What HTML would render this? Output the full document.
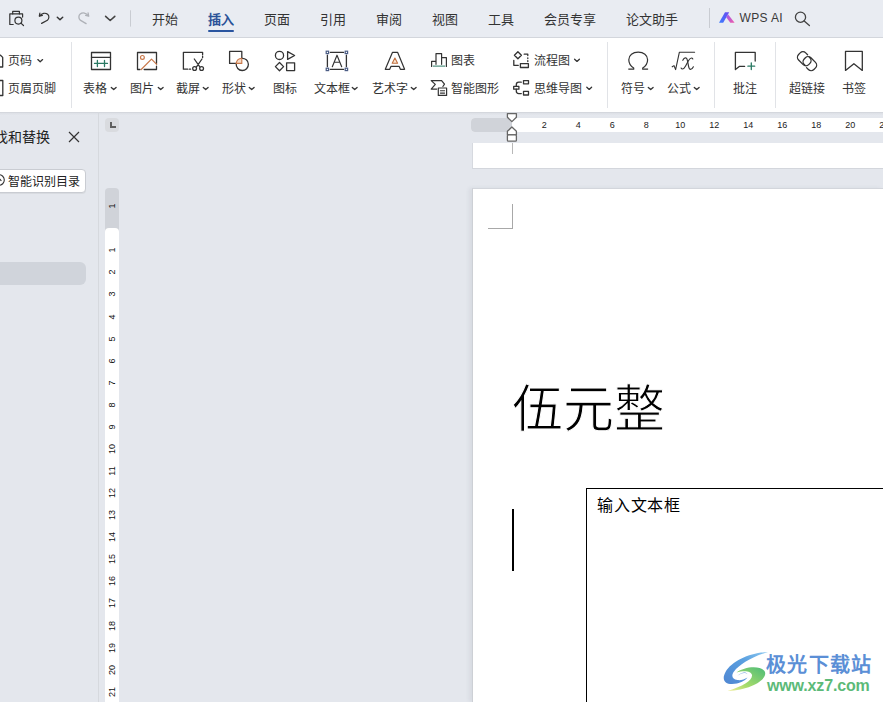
<!DOCTYPE html>
<html lang="zh-CN"><head><meta charset="utf-8">
<style>
*{margin:0;padding:0;box-sizing:border-box}
html,body{width:883px;height:702px;overflow:hidden;background:#e4e7ed;font-family:"Liberation Sans",sans-serif;color:#222}
.a{position:absolute}
svg{position:absolute;overflow:visible}
#top{position:absolute;left:0;top:0;width:883px;height:38px;background:#e9ecf2}
.tab{position:absolute;top:9.5px;font-size:13px;line-height:19px;color:#333;white-space:nowrap}
#ribbon{position:absolute;left:0;top:38px;width:883px;height:74px;background:#fff}
.lbl{position:absolute;top:80.5px;font-size:12px;line-height:17px;color:#333;white-space:nowrap}
.sep{position:absolute;top:42px;width:1px;height:66px;background:#e1e3e7}
.dd{position:absolute;width:6px;height:4px}
.rn{position:absolute;top:118px;width:20px;margin-left:-10px;text-align:center;font-size:9px;line-height:14px;color:#222}
.vn{position:absolute;left:112px;width:20px;height:12px;margin-left:-10px;margin-top:-6px;text-align:center;font-size:9px;line-height:12px;color:#111;transform:rotate(-90deg)}
</style></head><body>
<div id="top"></div>
<svg style="left:0;top:0" width="140" height="38" viewBox="0 0 140 38">
 <g fill="none" stroke="#333" stroke-width="1.2" stroke-linecap="round" stroke-linejoin="round">
  <path d="M12.7 13.9V11.3h6.7v2.6"/>
  <path d="M13.2 24.5H9.8V13.9h12.8v3.2"/>
  <circle cx="18.4" cy="20.6" r="3.5"/>
  <path d="M20.9 23.1l2.6 2.4"/>
  <path d="M39.3 16.2l0.6-3.2M39.3 16.2l3.1-0.9"/>
  <path d="M39.6 15.8c2.4-2.6 5.8-3.4 8-1.5c1.9 1.6 1.6 4.2 -0.2 6l-5.8 3.1"/>
  <path d="M57.3 17.3l2.7 2.5l2.7-2.5" stroke-width="1.5"/>
 </g>
 <g fill="none" stroke="#aeb1b7" stroke-width="1.3" stroke-linecap="round" stroke-linejoin="round">
  <path d="M88.7 16.2l-0.6-3.2M88.7 16.2l-3.1-0.9"/>
  <path d="M88.4 15.6c-2.2-2.6-5.6-3.6-8.2-1.6c-1.8 1.4-1.7 4.3 0 6.1l5.9 3.5"/>
 </g>
 <path d="M105.6 16.4l4.6 4.1l4.6-4.1" fill="none" stroke="#444" stroke-width="1.6" stroke-linecap="round" stroke-linejoin="round"/>
 <rect x="130" y="10.3" width="1" height="16.3" fill="#c9ccd2"/>
</svg>
<div class="tab" style="left:152px">开始</div>
<div class="tab" style="left:208px;color:#2a5298;font-weight:bold">插入</div>
<div class="a" style="left:208px;top:30px;width:26px;height:2px;background:#2a55a0;border-radius:1px"></div>
<div class="tab" style="left:264px">页面</div>
<div class="tab" style="left:320px">引用</div>
<div class="tab" style="left:376px">审阅</div>
<div class="tab" style="left:432px">视图</div>
<div class="tab" style="left:488px">工具</div>
<div class="tab" style="left:544px">会员专享</div>
<div class="tab" style="left:626px">论文助手</div>
<div class="a" style="left:709px;top:8px;width:1px;height:20px;background:#c9ccd2"></div>
<svg style="left:718px;top:11px" width="18" height="13" viewBox="0 0 18 13">
 <defs>
  <linearGradient id="wl" x1="0" y1="1" x2="1" y2="0"><stop offset="0" stop-color="#3b7bff"/><stop offset="1" stop-color="#6a4cf0"/></linearGradient>
  <linearGradient id="wr" x1="0" y1="0" x2="1" y2="1"><stop offset="0" stop-color="#9a5cf0"/><stop offset="1" stop-color="#f05aa8"/></linearGradient>
 </defs>
 <path d="M1 11.7L7 1.2h4.2L5.2 11.7z" fill="url(#wl)"/>
 <path d="M8.2 6.2L10 3.2l6.6 8.5h-4.3z" fill="url(#wr)"/>
</svg>
<div class="tab" style="left:739.5px;top:9px;font-size:12px;letter-spacing:0.35px;color:#3a3a3a">WPS AI</div>
<svg style="left:790px;top:8px" width="24" height="22" viewBox="0 0 24 22">
 <g fill="none" stroke="#444" stroke-width="1.3" stroke-linecap="round"><circle cx="10.5" cy="9.2" r="5.1"/><path d="M14.2 13l5.2 4.6"/></g>
</svg>

<div id="ribbon"></div>
<div class="a" style="left:0;top:37px;width:883px;height:1px;background:#d3d6dc"></div>
<div class="a" style="left:0;top:112px;width:883px;height:1px;background:#d4d7dd"></div>
<div class="a" style="left:0;top:113px;width:883px;height:3px;background:linear-gradient(#dde0e6,#e6e9ef)"></div>
<div class="sep" style="left:71px"></div>
<div class="sep" style="left:607px"></div>
<div class="sep" style="left:714px"></div>
<div class="sep" style="left:775px"></div>
<svg style="left:0;top:38px" width="883" height="74" viewBox="0 38 883 74">
 <g fill="none" stroke="#333" stroke-width="1.3" stroke-linejoin="round" stroke-linecap="round">
  <!-- page number icon (cut) -->
  <path d="M-6 55.2h6.5l2.2 2.2v9.6H-6"/>
  <path d="M-6 80.5h8.8v15H-6"/>
  <!-- dropdowns -->
  <path d="M37.8 59.6l2.4 2.2l2.4-2.2"/>
  <path d="M111.3 87.4l2.4 2.2l2.4-2.2"/>
  <path d="M158.3 87.4l2.4 2.2l2.4-2.2"/>
  <path d="M203.3 87.4l2.4 2.2l2.4-2.2"/>
  <path d="M249.3 87.4l2.4 2.2l2.4-2.2"/>
  <path d="M352.3 87.4l2.4 2.2l2.4-2.2"/>
  <path d="M411.3 87.4l2.4 2.2l2.4-2.2"/>
  <path d="M574.6 59.2l2.4 2.2l2.4-2.2"/>
  <path d="M586.8 87.2l2.4 2.2l2.4-2.2"/>
  <path d="M648.3 87.4l2.4 2.2l2.4-2.2"/>
  <path d="M694.3 87.4l2.4 2.2l2.4-2.2"/>
  <!-- table -->
  <rect x="91.5" y="52.5" width="19" height="17"/>
  <path d="M91.5 57.4h19"/>
  <!-- picture -->
  <path d="M140 69.5h-2.5v-17h19v11M156.5 66.2v3.3h-12.3"/>
  <!-- screenshot -->
  <path d="M187.8 69.2h-4.4v-16.9h19.2v2.4"/>
  <path d="M189.4 69.2h1.2M202.6 56.2v1.3"/>
  <path d="M194.3 59l5.5 7.8M202 59l-5.5 7.8"/>
  <circle cx="194.6" cy="68.5" r="1.9"/>
  <circle cx="201.6" cy="68.5" r="1.9"/>
  <!-- shape -->
  <path d="M236.2 63.4h-6.6v-12h12.2v6.6"/>
  <path d="M241.8 58.3a6.1 6.1 0 1 1 -5.6 5.6"/>
  <!-- icons -->
  <circle cx="279.5" cy="55.4" r="4.1"/>
  <path d="M287.6 51.6l7 3.9l-7 3.9z"/>
  <path d="M279.5 62.5l4.1 4.1l-4.1 4.1l-4.1-4.1z"/>
  <rect x="286.6" y="62.8" width="8" height="7.8"/>
  <!-- textbox -->
  <path d="M330.3 52.4h13.3M330.3 69.4h13.3M327.4 55.2v11.5M346.4 55.2v11.5"/>
  <path d="M332.3 66.7l4.7-11.5l4.7 11.5M334.4 62.2h5.2" stroke-width="1.15"/>
  <!-- wordart -->
  <path d="M385.3 69.3L392.4 52.4h5.3l6.9 16.9h-4.2l-1.2-2.9h-8.3l-1.2 2.9z" stroke-width="1.2"/>
  <!-- chart -->
  <path d="M431.6 66.5v-5.2h4.4M436 64.3v-10.7h5.6v10.7M441.6 57.6h4.8v8.9" stroke-width="1.2"/>
  <!-- smart art -->
  <path d="M441.6 80.6h-10.4l4.1 3.8l-4.1 4.7h5.5M441.6 80.6l2.9 3.6l-1.6 2.3" stroke-width="1.2"/>
  <rect x="438.3" y="88" width="8.3" height="7.4" stroke-width="1.2"/>
  <path d="M440.4 90.8h4.2M440.4 93.1h4.2" stroke-width="1.1"/>
  <!-- flowchart -->
  <path d="M517.9 51.8l3.5 3.5l-3.5 3.5l-3.5-3.5z"/>
  <path d="M524.2 54.2h3.6v1.4M527.8 57.8v0.8M527.8 60.6v1"/>
  <path d="M513.8 60.3v5h4.5"/>
  <rect x="520.4" y="63.6" width="8" height="3.9"/>
  <!-- mindmap -->
  <rect x="513.7" y="86.4" width="5.2" height="2.8"/>
  <rect x="523.5" y="80.6" width="5" height="3.2"/>
  <rect x="523.5" y="91.4" width="5" height="3.6"/>
  <path d="M516.3 86.4v-1.7a2.5 2.5 0 0 1 2.5-2.5h2.5M516.3 89.2v1.9a2.5 2.5 0 0 0 2.5 2.5h2.5"/>
  <!-- sqrt -->
  <path d="M672.2 66.8l1.8-1.2l1.6 4l3.8-17.4h15.2" stroke-width="1.1"/>
  <path d="M682.8 60.3c0.8-1.8 2.2-2.8 3.4-2.3c1 0.5 1.2 2 1.5 3.8l0.9 4.6c0.3 1.7 0.7 3 1.9 3c1.2 0 2.2-1.2 2.9-2.6" stroke-width="1.15"/>
  <path d="M692.8 59c-0.3-0.7-0.8-1-1.4-1c-1.2 0-2.2 1.3-3.3 3.3l-2.5 4.7c-0.9 1.7-1.9 3-3.2 3c-0.6 0-1-0.3-1.3-0.9" stroke-width="1.15"/>
  <!-- comment -->
  <path d="M744.6 66.4h-5.3l-3.9 3.1v-17.1h19.8v8.6"/>
  <!-- link -->
  <path d="M807.6 54.8l-1.9-1.9a3.9 3.9 0 0 0 -5.5 0l-1.6 1.6a3.9 3.9 0 0 0 0 5.5l4.6 4.6a3.9 3.9 0 0 0 5.5 0l1.2-1.2a3.9 3.9 0 0 0 0-5.5l-0.8-0.8"/>
  <path d="M806.5 67.6l1.9 1.9a3.9 3.9 0 0 0 5.5 0l1.6-1.6a3.9 3.9 0 0 0 0-5.5l-4.6-4.6a3.9 3.9 0 0 0 -5.5 0l-1.2 1.2a3.9 3.9 0 0 0 0 5.5l0.8 0.8"/>
  <!-- bookmark -->
  <path d="M845.5 51.4h16.8v19l-8.4-6.7l-8.4 6.7z"/>
 </g>
 <!-- colored parts -->
 <g fill="none" stroke="#2b7a64" stroke-width="1.3" stroke-linecap="round">
  <path d="M94.5 63.4h13M97.4 60.5v6M104.5 60.5v6"/>
  <path d="M433.2 66.1h11.6" stroke-width="1"/>
  <path d="M751.3 62.8v6.8M747.9 66.2h6.8"/>
 </g>
 <g fill="none" stroke="#c9784a" stroke-width="1.2" stroke-linecap="round" stroke-linejoin="round">
  <circle cx="142.4" cy="57.4" r="1.9"/>
  <path d="M141.2 69.5l10.3-10.4l5.2 5.2"/>
 </g>
 <path d="M394.9 58l2.7 5.3h-5.4z" fill="#fbe6d2" stroke="#c07040" stroke-width="1.1" stroke-linejoin="round"/>
 <path d="M241.8 58.3v5.1h-5.6a6 6 0 0 1 5.6-5.1z" fill="#f6dcc8" stroke="#c9784a" stroke-width="1.1"/>
 <g fill="#fff" stroke="#4b5d85" stroke-width="1.2">
  <rect x="326.2" y="51.2" width="2.4" height="2.4"/><rect x="345.2" y="51.2" width="2.4" height="2.4"/>
  <rect x="326.2" y="68.2" width="2.4" height="2.4"/><rect x="345.2" y="68.2" width="2.4" height="2.4"/>
 </g>
 <path d="M628.3 69.2h5.4v-1.1c-3-1.9-4.9-4.9-4.9-8.3c0-4.7 4-7.6 9.4-7.6s9.4 2.9 9.4 7.6c0 3.4-1.9 6.4-4.9 8.3v1.1h5.4" fill="none" stroke="#333" stroke-width="1.2" stroke-linejoin="round"/>
</svg>
<div class="lbl" style="left:83px">表格</div>
<div class="lbl" style="left:130px">图片</div>
<div class="lbl" style="left:176px">截屏</div>
<div class="lbl" style="left:222px">形状</div>
<div class="lbl" style="left:273px">图标</div>
<div class="lbl" style="left:314px">文本框</div>
<div class="lbl" style="left:372px">艺术字</div>
<div class="lbl" style="left:621px">符号</div>
<div class="lbl" style="left:667px">公式</div>
<div class="lbl" style="left:733px">批注</div>
<div class="lbl" style="left:789px">超链接</div>
<div class="lbl" style="left:842px">书签</div>
<div class="lbl" style="left:8px;top:52.5px">页码</div>
<div class="lbl" style="left:8px">页眉页脚</div>
<div class="lbl" style="left:451px;top:52.5px">图表</div>
<div class="lbl" style="left:451px">智能图形</div>
<div class="lbl" style="left:534px;top:52.5px">流程图</div>
<div class="lbl" style="left:534px">思维导图</div>


<!-- left panel -->
<div class="a" style="left:98px;top:112px;width:1px;height:590px;background:#d6d9de"></div>
<div class="a" style="left:-20.5px;top:127px;font-size:14px;line-height:20px;color:#222;white-space:nowrap">查找和替换</div>
<svg style="left:68px;top:131px" width="12" height="12" viewBox="0 0 12 12"><path d="M1 1l10 10M11 1L1 11" stroke="#333" stroke-width="1.2" fill="none"/></svg>
<div class="a" style="left:-20px;top:169px;width:106px;height:24px;background:#fff;border:1px solid #c9ccd2;border-radius:4px;box-shadow:0 1px 0 #d8dbe0"></div>
<svg style="left:-8px;top:173px" width="14" height="14" viewBox="0 0 14 14"><circle cx="7" cy="7" r="5.3" fill="none" stroke="#333" stroke-width="1.1"/><path d="M4.6 7.8l2.4-2.4l2.4 2.4" fill="none" stroke="#333" stroke-width="1.1"/></svg>
<div class="a" style="left:8px;top:173.5px;font-size:12px;line-height:17px;color:#222;white-space:nowrap">智能识别目录</div>
<div class="a" style="left:-20px;top:262px;width:106px;height:23px;background:#d0d4db;border-radius:6px"></div>

<!-- L tab -->
<div class="a" style="left:105px;top:118px;width:14px;height:14px;background:#d9dbdf;border-radius:4px"></div>
<svg style="left:105px;top:118px" width="14" height="14" viewBox="0 0 14 14"><path d="M6 4v5h5" fill="none" stroke="#5f5f5f" stroke-width="2"/></svg>

<!-- vertical ruler -->
<div class="a" style="left:105px;top:188px;width:14px;height:60px;background:#d0d3d9;border-radius:4px 4px 0 0"></div>
<div class="a" style="left:105px;top:228px;width:14px;height:480px;background:#fff;border-radius:4px 4px 0 0"></div>
<div class="vn" style="top:206.3px">1</div>
<div class="vn" style="top:250.3px">1</div><div class="vn" style="top:272.4px">2</div><div class="vn" style="top:294.4px">3</div><div class="vn" style="top:316.5px">4</div><div class="vn" style="top:338.6px">5</div><div class="vn" style="top:360.6px">6</div><div class="vn" style="top:382.7px">7</div><div class="vn" style="top:404.8px">8</div><div class="vn" style="top:426.9px">9</div><div class="vn" style="top:448.9px">10</div><div class="vn" style="top:471.0px">11</div><div class="vn" style="top:493.1px">12</div><div class="vn" style="top:515.1px">13</div><div class="vn" style="top:537.2px">14</div><div class="vn" style="top:559.3px">15</div><div class="vn" style="top:581.4px">16</div><div class="vn" style="top:603.4px">17</div><div class="vn" style="top:625.5px">18</div><div class="vn" style="top:647.6px">19</div><div class="vn" style="top:669.6px">20</div><div class="vn" style="top:691.7px">21</div>

<!-- horizontal ruler -->
<div class="a" style="left:471px;top:118px;width:420px;height:14px;background:#fff;border-radius:4px 0 0 4px"></div>
<div class="a" style="left:471px;top:118px;width:41px;height:14px;background:#d0d3d9;border-radius:4px 0 0 4px"></div>
<div class="rn" style="left:544.3px">2</div><div class="rn" style="left:578.3px">4</div><div class="rn" style="left:612.3px">6</div><div class="rn" style="left:646.3px">8</div><div class="rn" style="left:680.3px">10</div><div class="rn" style="left:714.3px">12</div><div class="rn" style="left:748.3px">14</div><div class="rn" style="left:782.3px">16</div><div class="rn" style="left:816.3px">18</div><div class="rn" style="left:850.3px">20</div><div class="rn" style="left:884.3px">22</div>
<svg style="left:500px;top:110px" width="24" height="36" viewBox="500 110 24 36">
 <g fill="#fff" stroke="#666" stroke-width="1.3" stroke-linejoin="round">
  <path d="M507.4 113.6h9v3.6l-4.5 4.4l-4.5-4.4z"/>
  <path d="M511.9 127l4.5 4.3v3.6h-9v-3.6z"/>
  <rect x="507.4" y="134.9" width="9" height="6.3" rx="1"/>
 </g>
</svg>

<!-- header page strip -->
<div class="a" style="left:472px;top:143px;width:411px;height:26px;background:#fff;border-bottom:1px solid #d3d6dc;border-left:1px solid #d6d9df"></div>
<div class="a" style="left:512px;top:143px;width:1px;height:11px;background:#b8b8b8"></div>

<!-- page -->
<div class="a" style="left:472px;top:188px;width:411px;height:514px;background:#fff;border-top:1px solid #d3d6dc;border-left:1px solid #cdd0d5;box-shadow:-3px 0 4px rgba(60,70,90,0.07)"></div>
<div class="a" style="left:488px;top:228px;width:25px;height:1px;background:#a8a8a8"></div>
<div class="a" style="left:512px;top:204px;width:1px;height:25px;background:#a8a8a8"></div>
<div class="a" style="left:512px;top:380px;font-family:'Liberation Serif',serif;font-size:51px;line-height:60px;color:#000;white-space:nowrap;-webkit-text-stroke:1px #fff;paint-order:normal">伍元整</div>
<div class="a" style="left:586px;top:488px;width:310px;height:230px;border:1px solid #000"></div>
<div class="a" style="left:597px;top:495.5px;font-size:16px;line-height:20px;color:#000;white-space:nowrap;letter-spacing:0.8px">输入文本框</div>
<div class="a" style="left:512px;top:509px;width:2px;height:62px;background:#000"></div>

<!-- watermark -->
<svg style="left:718px;top:645px" width="54" height="54" viewBox="0 0 54 54">
 <defs>
  <linearGradient id="g1" x1="0" y1="1" x2="1" y2="0"><stop offset="0" stop-color="#4f86d2"/><stop offset="0.6" stop-color="#5aa0e0"/><stop offset="1" stop-color="#8cc8f0"/></linearGradient>
  <linearGradient id="g2" x1="0" y1="1" x2="1" y2="0"><stop offset="0" stop-color="#f2ee9a"/><stop offset="0.35" stop-color="#a8dc6a"/><stop offset="1" stop-color="#4cbb78"/></linearGradient>
 </defs>
 <path d="M50 7C33 7.5 14 15.5 7.5 27C3.5 34.5 6.5 39 14 39C21 39 27 36 29.5 32.5C26.5 34.5 22.5 35.5 19.5 35C14 34.2 13 30.5 16 26.5C21 19.5 34 11.5 50 7Z" fill="url(#g1)"/>
 <path d="M19 31.5C22.5 27.5 27.5 27 29.5 29.2C28 27 24 26.5 19 31.5Z" fill="#5b8fd6"/>
 <path d="M18.5 27.5C26 21.5 42 20 46.5 26C51 33.5 34 45 9.5 46C25 41 34.5 35.5 34 30C33.5 26 26 25 18.5 27.5Z" fill="url(#g2)"/>
</svg>
<div class="a" style="left:766px;top:652.5px;font-size:20px;line-height:24px;font-weight:bold;color:#5b8fd6;white-space:nowrap;letter-spacing:1.3px">极光下载站</div>
<div class="a" style="left:767px;top:677px;font-size:16px;line-height:18px;font-weight:bold;color:#5cba78;white-space:nowrap;letter-spacing:-0.15px">www.xz7.com</div>

</body></html>
